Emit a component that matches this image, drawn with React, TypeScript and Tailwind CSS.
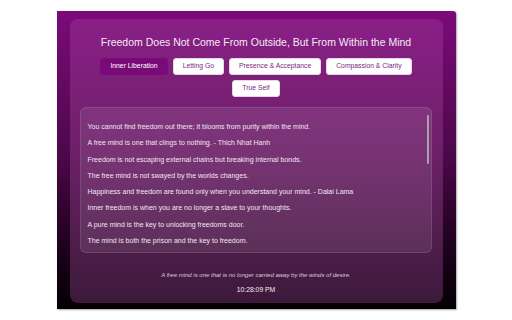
import { useState } from "react"

const TABS = ["Inner Liberation", "Letting Go", "Presence & Acceptance", "Compassion & Clarity", "True Self"]

const QUOTES = [
  "You cannot find freedom out there; it blooms from purity within the mind.",
  "A free mind is one that clings to nothing. - Thich Nhat Hanh",
  "Freedom is not escaping external chains but breaking internal bonds.",
  "The free mind is not swayed by the worlds changes.",
  "Happiness and freedom are found only when you understand your mind. - Dalai Lama",
  "Inner freedom is when you are no longer a slave to your thoughts.",
  "A pure mind is the key to unlocking freedoms door.",
  "The mind is both the prison and the key to freedom.",
  "No longer bound by desire, the mind rests in its own true nature.",
]

export default function App() {
  const [active, setActive] = useState("Inner Liberation")

  return (
    <div className="flex h-[320px] w-full items-center justify-center bg-white font-['Liberation_Sans',Arial,sans-serif]">
      <div className="flex h-[298px] w-[399px] flex-col rounded-tr-[3px] bg-gradient-to-b from-[#7c0a7a] via-[#4a0848] to-[#050005] px-[13px] pt-[8px] pb-[6px] shadow-[1px_1px_2px_rgba(0,0,0,0.35)]">
        {/* Main card */}
        <div className="flex flex-1 flex-col items-center rounded-[8px] bg-gradient-to-b from-[#8a1f87] via-[#6a2066] to-[#3c1a3a] pt-[16px]">
          <h1 className="text-[10.5px] leading-[14px] text-[#f3eaf3]">
            Freedom Does Not Come From Outside, But From Within the Mind
          </h1>

          <div className="mt-[9px] flex w-[320px] flex-wrap justify-center gap-x-[5px] gap-y-[5px]">
            {TABS.map((tab) => (
              <button
                key={tab}
                type="button"
                onClick={() => setActive(tab)}
                className={`h-[17px] rounded-[3px] border px-[9px] text-[6.8px] leading-none ${
                  active === tab
                    ? "border-[#7a0a78] bg-[#7a0a78] text-white"
                    : "border-[#e6d6e6] bg-white text-[#85237f]"
                }`}
              >
                {tab}
              </button>
            ))}
          </div>

          {/* Quote list */}
          <div className="relative mt-[10px] ml-[10px] h-[146px] w-[352px] self-start overflow-hidden rounded-[6px] border border-[#ffffff1c] bg-[#ffffff16] pl-[7px] pt-[11px]">
            {QUOTES.map((q) => (
              <p key={q} className="whitespace-nowrap text-[7px] leading-[16.3px] text-[#f1e6f1]">
                {q}
              </p>
            ))}
            <div className="absolute right-[2px] top-[7px] h-[49px] w-[2px] rounded-full bg-[#a9a3a9]" />
          </div>

          <p className="mt-[17px] text-[6px] leading-[10px] italic text-[#d9cdd9]">
            A free mind is one that is no longer carried away by the winds of desire.
          </p>
          <p className="mt-[5px] text-[6.8px] leading-[10px] text-[#f3eaf3]">10:28:09 PM</p>
        </div>
      </div>
    </div>
  )
}
